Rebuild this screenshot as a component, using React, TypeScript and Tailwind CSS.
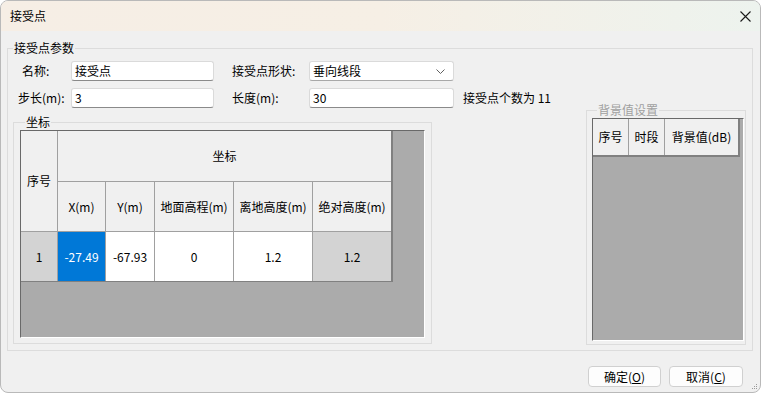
import React from 'react';

const font = "font-['Noto_Sans_CJK_SC',sans-serif]";

const Input: React.FC<{ value: string; width: string }> = ({ value, width }) => (
  <div
    className={`${width} h-[20px] flex items-center pl-[3px] bg-white border border-[#dadada] border-b-[#8a8a8a] rounded-[3px] text-[12px] text-black`}
  >
    {value}
  </div>
);

const Cell: React.FC<{ className?: string; children?: React.ReactNode }> = ({ className = 'bg-[#f0f0f0]', children }) => (
  <div className={`flex items-center justify-center text-[12px] text-black ${className}`}>{children}</div>
);

export default function App() {
  return (
    <div className={`w-[761px] h-[395px] bg-white ${font}`}>
      <div className="relative w-[761px] h-[393px] flex flex-col border border-[#b9b9b9] rounded-[8px] overflow-hidden bg-[#f0f0f0]">
        {/* title bar */}
        <div className="h-[30px] shrink-0 flex items-center pl-[9px] bg-gradient-to-r from-[#f6eee5] via-[#f6efe5] to-[#edf3ee]">
          <span className="text-[12px] text-black">接受点</span>
          <svg className="ml-auto mr-[9px]" width="11" height="11" viewBox="0 0 11 11">
            <path d="M0.5 0.5 L10.5 10.5 M10.5 0.5 L0.5 10.5" stroke="#1a1a1a" strokeWidth="1.1" fill="none" />
          </svg>
        </div>

        {/* body */}
        <fieldset className="ml-[6px] mt-[9px] w-[746px] border border-[#dcdcdc]">
          <legend className="ml-[5px] px-[1px] h-[16px] leading-[16px] text-[12px] text-black">接受点参数</legend>
          <div className="flex">
            <div className="flex-1 flex flex-col pt-[5px] pb-[6px]">
              <div className="flex items-center h-[20px] text-[12px] text-black">
                <div className="w-[63px] pl-[14px]">名称:</div>
                <Input value="接受点" width="w-[143px]" />
                <div className="w-[95px] pl-[18px]">接受点形状:</div>
                <div className="w-[145px] h-[20px] flex items-center pl-[3px] pr-[8px] bg-white border border-[#dadada] border-b-[#a8a8a8] rounded-[3px]">
                  <span>垂向线段</span>
                  <svg className="ml-auto" width="9" height="5" viewBox="0 0 9 5">
                    <path d="M0.5 0.5 L4.5 4.5 L8.5 0.5" stroke="#606060" strokeWidth="1" fill="none" />
                  </svg>
                </div>
              </div>
              <div className="flex items-center h-[20px] mt-[7px] text-[12px] text-black">
                <div className="w-[63px] pl-[10px]">步长(m):</div>
                <Input value="3" width="w-[143px]" />
                <div className="w-[95px] pl-[18px]">长度(m):</div>
                <Input value="30" width="w-[145px]" />
                <div className="pl-[9px]">接受点个数为 11</div>
              </div>

              <fieldset className="ml-[5px] mt-[6px] w-[419px] border border-[#dcdcdc] pl-[6px] pb-[5px]">
                <legend className="ml-[5px] px-[1px] h-[16px] leading-[16px] text-[12px] text-black">坐标</legend>
                <div className="w-[405px] h-[208px] bg-[#ababab] border border-t-[#696969] border-l-[#696969] border-r-white border-b-white">
                  <div className="grid grid-cols-[36px_47px_48px_78px_78px_78px] grid-rows-[50px_49px_49px] gap-px w-fit bg-[#a0a0a0] border-r-2 border-b border-[#808080]">
                    <Cell className="row-span-2 bg-[#f0f0f0]">序号</Cell>
                    <Cell className="col-span-5 bg-[#f0f0f0]">坐标</Cell>
                    <Cell>X(m)</Cell>
                    <Cell>Y(m)</Cell>
                    <Cell>地面高程(m)</Cell>
                    <Cell>离地高度(m)</Cell>
                    <Cell>绝对高度(m)</Cell>
                    <Cell className="bg-[#d3d3d3]">1</Cell>
                    <Cell className="bg-[#0078d7] !text-white">-27.49</Cell>
                    <Cell className="bg-white">-67.93</Cell>
                    <Cell className="bg-white">0</Cell>
                    <Cell className="bg-white">1.2</Cell>
                    <Cell className="bg-[#d3d3d3]">1.2</Cell>
                  </div>
                </div>
              </fieldset>
            </div>

            <fieldset className="self-end mb-[5px] mr-[6px] w-[160px] border border-[#dcdcdc] pl-[5px] pb-[3px]">
              <legend className="ml-[5px] px-[1px] h-[16px] leading-[16px] text-[12px] text-[#a0a0a0]">背景值设置</legend>
              <div className="w-[152px] h-[223px] bg-[#ababab] border border-t-[#696969] border-l-[#696969] border-r-white border-b-white">
                <div className="grid grid-cols-[35px_35px_73px] h-[38px] gap-px w-fit bg-[#a0a0a0] border-r-2 border-b-2 border-[#808080]">
                  <Cell>序号</Cell>
                  <Cell>时段</Cell>
                  <Cell>背景值(dB)</Cell>
                </div>
              </div>
            </fieldset>
          </div>
        </fieldset>

        {/* buttons */}
        <div className="flex justify-end gap-[8px] mt-[15px] pr-[17px]">
          <button className="w-[73px] h-[21px] flex items-center justify-center bg-[#fdfdfd] border border-[#d0d0d0] rounded-[4px] text-[12px] text-black">
            确定(<span className="underline">O</span>)
          </button>
          <button className="w-[74px] h-[21px] flex items-center justify-center bg-[#fdfdfd] border border-[#d0d0d0] rounded-[4px] text-[12px] text-black">
            取消(<span className="underline">C</span>)
          </button>
        </div>

        <svg className="absolute right-[2px] bottom-[2px]" width="6" height="6" viewBox="0 0 6 6">
          <rect x="4" y="0" width="1" height="1" fill="#9a9a9a" />
          <rect x="2" y="2" width="1" height="1" fill="#9a9a9a" />
          <rect x="4" y="2" width="1" height="1" fill="#9a9a9a" />
          <rect x="0" y="4" width="1" height="1" fill="#9a9a9a" />
          <rect x="2" y="4" width="1" height="1" fill="#9a9a9a" />
          <rect x="4" y="4" width="1" height="1" fill="#9a9a9a" />
        </svg>
      </div>
    </div>
  );
}
